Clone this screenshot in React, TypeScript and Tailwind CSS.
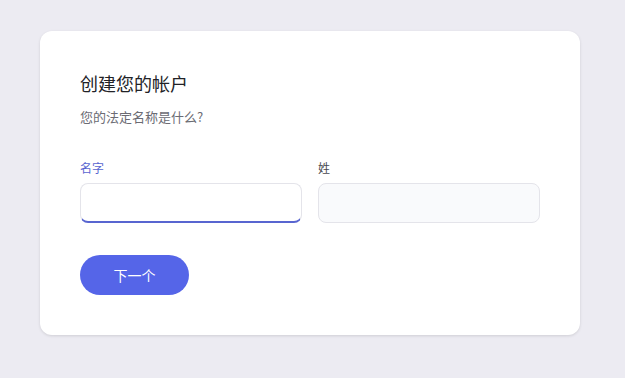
import React from "react";

const App = () => {
  return (
    <div
      className="min-h-screen w-full bg-[#ecebf2] pt-[31px] px-10"
      style={{ fontFamily: '"Noto Sans CJK SC", "Noto Sans", sans-serif' }}
    >
      <div className="w-[540px] rounded-xl bg-white px-10 pt-10 pb-10 shadow-[0_1px_3px_rgba(0,0,0,0.12)]">
        <h1 className="text-[18px] leading-[24px] text-[#222226]">创建您的帐户</h1>
        <p className="mt-3 text-[13px] leading-[20px] text-[#6b6b73]">您的法定名称是什么?</p>

        <div className="mt-[33px] grid grid-cols-2 gap-4">
          <div className="flex flex-col">
            <label className="text-[12px] leading-[16px] text-[#5865d0]">名字</label>
            <input
              className="mt-[7px] h-10 rounded-lg border border-[#e4e4ea] border-b-2 border-b-[#5865d0] bg-white px-3 outline-none"
              type="text"
            />
          </div>
          <div className="flex flex-col">
            <label className="text-[12px] leading-[16px] text-[#4a4a52]">姓</label>
            <input
              className="mt-[7px] h-10 rounded-lg border border-[#e4e4ea] bg-[#f9fafc] px-3 outline-none"
              type="text"
            />
          </div>
        </div>

        <button className="mt-8 h-10 w-[109px] rounded-full bg-[#5565e8] text-[14px] text-white">
          下一个
        </button>
      </div>
    </div>
  );
};

export default App;
